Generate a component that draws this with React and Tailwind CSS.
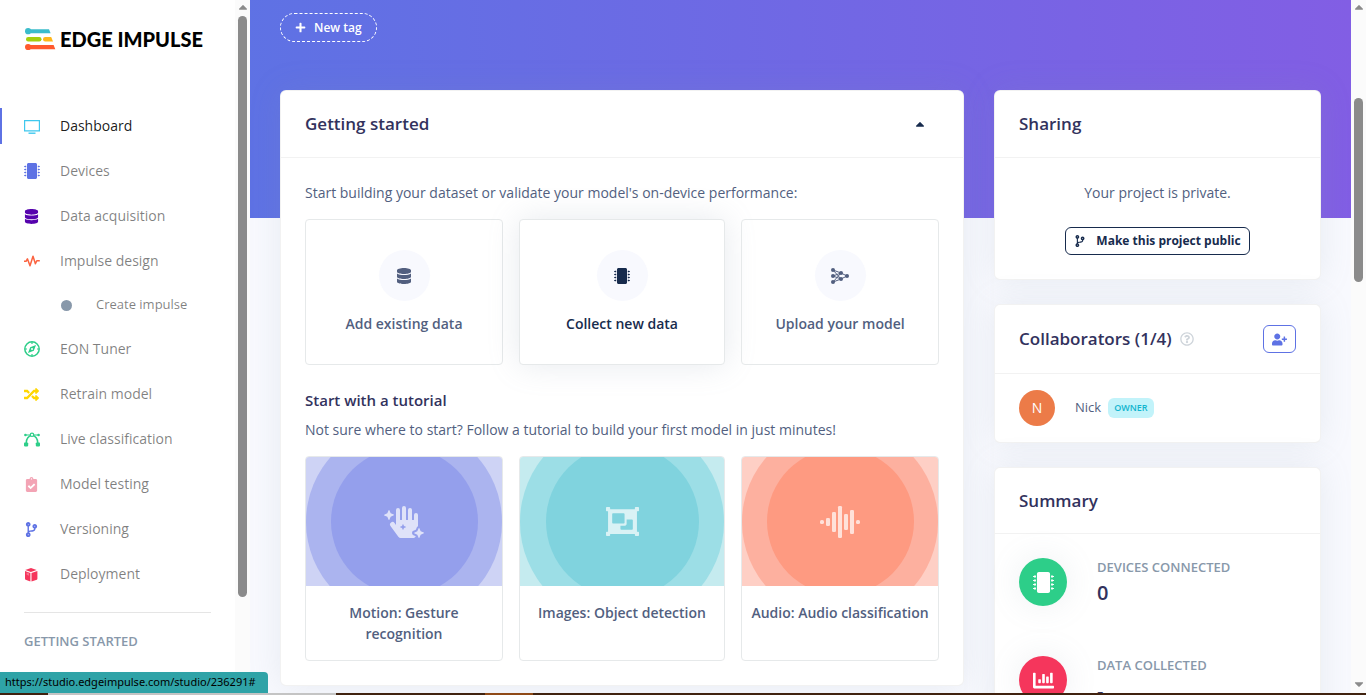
import React from "react";
import {
  FaMicrochip,
  FaDatabase,
  FaRandom,
  FaClipboardCheck,
  FaCodeBranch,
  FaPlus,
  FaUserPlus,
  FaChartBar,
  FaHandSparkles,
  FaObjectGroup,
  FaCaretUp,
  FaCaretDown,
  FaRegQuestionCircle,
} from "react-icons/fa";

const ScreenIcon = () => (
  <svg width="16" height="16" viewBox="0 0 16 16" fill="none" stroke="currentColor">
    <path d="M.6 2.6h14.8v10.3H.6z" strokeWidth="1.2" />
    <path d="M4.5 15.2h7" strokeWidth="1.4" />
  </svg>
);

const PulseIcon = () => (
  <svg width="16" height="16" viewBox="0 0 16 16" fill="none" stroke="currentColor" strokeWidth="1.5" strokeLinejoin="round">
    <path d="M0 8.2h2.2l1.2-2.4 2.6 7 3-9.6 2.4 7.6 1.4-3h3" />
  </svg>
);

const CompassIcon = () => (
  <svg width="16" height="16" viewBox="0 0 16 16" fill="none" stroke="currentColor">
    <circle cx="8" cy="8" r="7.2" strokeWidth="1.5" />
    <path d="M8 1v2M8 13v2M1 8h2M13 8h2" strokeWidth="1.2" />
    <path d="M12 4 9.8 9.8 4 12 6.2 6.2z" fill="currentColor" stroke="none" />
    <circle cx="8" cy="8" r="1" fill="white" stroke="none" />
  </svg>
);

const VectorIcon = () => (
  <svg width="16" height="16" viewBox="0 0 16 16" fill="none" stroke="currentColor" strokeWidth="1.2">
    <path d="M2.2 12C2.4 7.6 4.6 4.8 8 4.2c3.4.6 5.6 3.4 5.8 7.8" strokeWidth="1.5" />
    <path d="M2 4h4M10 4h4" />
    <circle cx="8" cy="3.8" r="1.7" fill="white" />
    <circle cx="1.4" cy="4" r="1.3" fill="currentColor" stroke="none" />
    <circle cx="14.6" cy="4" r="1.3" fill="currentColor" stroke="none" />
    <rect x="0" y="11.4" width="4.2" height="4" rx=".8" fill="currentColor" stroke="none" />
    <rect x="11.8" y="11.4" width="4.2" height="4" rx=".8" fill="currentColor" stroke="none" />
  </svg>
);

const BoxIcon = () => (
  <svg width="15" height="16" viewBox="0 0 15 16" fill="currentColor">
    <path d="M7 2 12.6 4 6.9 6.1 1.2 4z" />
    <path d="M1 5.1 6.4 7.1V15.4L1.6 13.7Q1 13.4 1 12.8z" />
    <path d="M13.4 5.1 7.5 7.1V15.4l5.3-1.7q.6-.3.6-.9z" />
    <path d="m2.6 6.4 2.4.9v2.4l-2.4-.9z" fill="white" opacity=".3" />
  </svg>
);

const NetworkIcon = () => (
  <svg width="18" height="16" viewBox="0 0 18 16" fill="currentColor" stroke="currentColor">
    <path d="M2 2l8 3 6 3-6 3-8 3M2 2l8 9M2 14l8-9M2 8l8-3M2 8l8 3" fill="none" strokeWidth="1" />
    <g stroke="none">
      <circle cx="2" cy="2" r="2" />
      <circle cx="2" cy="8" r="2" />
      <circle cx="2" cy="14" r="2" />
      <circle cx="10" cy="5" r="2" />
      <circle cx="10" cy="11" r="2" />
      <circle cx="16" cy="8" r="2" />
    </g>
  </svg>
);

const WaveformIcon = () => (
  <svg width="40" height="32" viewBox="0 0 40 32" fill="currentColor">
    <rect x="0" y="14" width="4" height="4" rx="1.6" />
    <rect x="6" y="12" width="4" height="8" rx="1.2" />
    <rect x="12" y="6" width="4" height="20" rx="1.2" />
    <rect x="18" y="0" width="4" height="32" rx="1.2" />
    <rect x="24" y="8" width="4" height="16" rx="1.2" />
    <rect x="30" y="4" width="4" height="24" rx="1.2" />
    <rect x="36" y="14" width="4" height="4" rx="1.6" />
  </svg>
);

const LogoMark = () => (
  <svg width="31" height="23" viewBox="0 0 31 23">
    <path d="M3 1.2h21l1.6 4.1H3z" fill="#3bbccb" />
    <circle cx="3.1" cy="3.2" r="3.1" fill="#3bbccb" />
    <rect x="1" y="9" width="15.5" height="4.4" rx="2.2" fill="#a4cf0c" />
    <path d="M20.2 9h6l1.8 4.4h-7.8a2.2 2.2 0 0 1 0-4.4z" fill="#ffb71b" />
    <path d="M3 17h25.6l1.7 4.2H3z" fill="#ff592d" />
    <circle cx="3.1" cy="19" r="3.1" fill="#ff592d" />
  </svg>
);

const navItems = [
  { label: "Dashboard", icon: <ScreenIcon />, color: "text-[#3fc8ee]", active: true },
  { label: "Devices", icon: <FaMicrochip size={16} />, color: "text-[#5e72e4]" },
  { label: "Data acquisition", icon: <FaDatabase size={15} />, color: "text-[#5603ad]" },
  { label: "Impulse design", icon: <PulseIcon />, color: "text-[#fb6340]" },
  { label: "Create impulse", sub: true },
  { label: "EON Tuner", icon: <CompassIcon />, color: "text-[#2dce89]" },
  { label: "Retrain model", icon: <FaRandom size={15} />, color: "text-[#ffd600]" },
  { label: "Live classification", icon: <VectorIcon />, color: "text-[#2dce89]" },
  { label: "Model testing", icon: <FaClipboardCheck size={15} />, color: "text-[#f3a4b5]" },
  { label: "Versioning", icon: <FaCodeBranch size={15} />, color: "text-[#5e72e4]" },
  { label: "Deployment", icon: <BoxIcon />, color: "text-[#f5365c]" },
];

function NavItem({ item }) {
  if (item.sub) {
    return (
      <li>
        <a href="#create" className="flex h-[34px] items-center pl-[61px] text-[13px] text-black/50">
          <span className="mr-6 size-[11px] rounded-full bg-[#8898aa]" />
          {item.label}
        </a>
      </li>
    );
  }
  return (
    <li>
      <a
        href="#nav"
        className={
          item.active
            ? "flex h-9 items-center border-l-2 border-[#5e72e4] pl-[22px] text-sm text-black/90"
            : "flex h-9 items-center pl-6 text-sm text-black/50"
        }
      >
        <span className={`flex w-9 items-center ${item.color}`}>{item.icon}</span>
        {item.label}
      </a>
    </li>
  );
}

function Sidebar() {
  return (
    <aside className="flex w-[250px] shrink-0 bg-white">
      <div className="min-w-0 flex-1 overflow-hidden">
        <a href="#home" className="flex h-[78px] items-center gap-1 pl-[25px] font-['Lato',sans-serif] text-xl font-black text-black">
          <LogoMark />
          EDGE IMPULSE
        </a>
        <nav className="pt-[30px]">
          <ul className="flex flex-col gap-[9px]">
            {navItems.map((item) => (
              <NavItem key={item.label} item={item} />
            ))}
          </ul>
        </nav>
        <hr className="mx-6 mt-5 border-black/10" />
        <h6 className="mt-5 pl-6 text-[13px] leading-4 font-semibold text-[#8898aa] uppercase">Getting started</h6>
      </div>
      <div className="flex w-[15px] flex-col items-center bg-[#fbfbfb]">
        <FaCaretUp size={14} className="mb-0.5 shrink-0 text-[#8b8b8b]" />
        <div className="h-[581px] w-[9px] rounded-full bg-[#8b8b8b]" />
      </div>
    </aside>
  );
}

function Card({ className, children }) {
  return (
    <section className={`rounded-md border border-black/5 bg-white shadow-[0_0_32px_0_rgba(136,152,170,0.15)] ${className ?? ""}`}>
      {children}
    </section>
  );
}

function CardHeader({ title, height = "h-[67px]", children }) {
  return (
    <header className={`flex items-center border-b border-black/5 px-6 ${height}`}>
      <h2 className="text-[17px] leading-6 font-semibold text-[#32325d]">{title}</h2>
      {children}
    </header>
  );
}

const starters = [
  { label: "Add existing data", icon: <FaDatabase size={16} /> },
  { label: "Collect new data", icon: <FaMicrochip size={16} />, hot: true },
  { label: "Upload your model", icon: <NetworkIcon /> },
];

const tutorials = [
  { label: "Motion: Gesture recognition", icon: <FaHandSparkles size={40} />, outer: "bg-[#ced3f5]", ring: "bg-[#abb4ef]", inner: "bg-[#949fec]" },
  { label: "Images: Object detection", icon: <FaObjectGroup size={33} />, outer: "bg-[#c5ebef]", ring: "bg-[#9cdee6]", inner: "bg-[#80d3de]" },
  { label: "Audio: Audio classification", icon: <WaveformIcon />, outer: "bg-[#fecfc5]", ring: "bg-[#fdb09f]", inner: "bg-[#fe9a81]" },
];

function GettingStarted() {
  return (
    <Card className="col-span-2">
      <CardHeader title="Getting started">
        <button type="button" aria-label="Collapse" className="mr-3 ml-auto text-[#172b4d]">
          <FaCaretUp size={14} />
        </button>
      </CardHeader>
      <div className="px-6 pt-6 pb-6">
        <p className="text-sm leading-[22px]">Start building your dataset or validate your model's on-device performance:</p>
        <div className="mt-[15px] grid grid-cols-[198fr_206fr_198fr] gap-4">
          {starters.map((s) => (
            <button
              key={s.label}
              type="button"
              className={
                s.hot
                  ? "flex h-[146px] flex-col items-center rounded border border-[#e6e9ea] bg-white pt-[30px] text-[#172b4d] shadow-[0_0_32px_0_rgba(136,152,170,0.2)]"
                  : "flex h-[146px] flex-col items-center rounded border border-[#e6e9ea] pt-[30px]"
              }
            >
              <span className="flex size-[51px] items-center justify-center rounded-full bg-[#f8f9fe]">{s.icon}</span>
              <span className="mt-3 text-sm leading-[21px] font-semibold">{s.label}</span>
            </button>
          ))}
        </div>
        <h3 className="mt-6 text-[15px] leading-[22px] font-semibold text-[#32325d]">Start with a tutorial</h3>
        <p className="mt-2 text-sm leading-[22px]">Not sure where to start? Follow a tutorial to build your first model in just minutes!</p>
        <div className="mt-[15px] grid grid-cols-[198fr_206fr_198fr] gap-4">
          {tutorials.map((t) => (
            <a key={t.label} href="#tutorial" className="flex h-[205px] flex-col overflow-hidden rounded border border-[#e6e9ea]">
              <span className={`flex h-[129px] items-center justify-center overflow-hidden ${t.outer}`}>
                <span className={`flex aspect-square w-full shrink-0 items-center justify-center rounded-full ${t.ring}`}>
                  <span className={`flex aspect-square w-3/4 items-center justify-center rounded-full text-white/70 ${t.inner}`}>
                    {t.icon}
                  </span>
                </span>
              </span>
              <span className="px-1 pt-4 text-center text-sm leading-[21px] font-semibold">{t.label}</span>
            </a>
          ))}
        </div>
      </div>
    </Card>
  );
}

function Stat({ icon, color, label, value }) {
  return (
    <div className="flex gap-[30px]">
      <span className={`flex size-12 shrink-0 items-center justify-center rounded-full text-white shadow-[0_0_32px_0_rgba(136,152,170,0.15)] ${color}`}>
        {icon}
      </span>
      <div>
        <h5 className="text-[13px] leading-[19px] font-semibold text-[#8898aa] uppercase">{label}</h5>
        <p className="text-xl leading-8 font-semibold text-[#32325d]">{value}</p>
      </div>
    </div>
  );
}

function RightColumn() {
  return (
    <div className="flex flex-col gap-6">
      <Card>
        <CardHeader title="Sharing" />
        <div className="flex flex-col items-center px-6 py-6">
          <p className="text-sm leading-[22px]">Your project is private.</p>
          <button type="button" className="mt-[23px] flex h-7 items-center gap-[10px] rounded-md border border-[#172b4d] px-2 text-xs font-bold text-[#172b4d]">
            <FaCodeBranch size={12} />
            Make this project public
          </button>
        </div>
      </Card>
      <Card>
        <CardHeader title="Collaborators (1/4)" height="h-[69px]">
          <FaRegQuestionCircle size={14} className="ml-2 text-[#ced4da]" />
          <button type="button" aria-label="Add collaborator" className="ml-auto flex h-7 w-[33px] items-center justify-center rounded-md border border-[#5e72e4] text-[#5e72e4]">
            <FaUserPlus size={15} />
          </button>
        </CardHeader>
        <div className="flex items-center px-6 py-4">
          <span className="flex size-9 items-center justify-center rounded-full bg-[#ec7b48] text-sm text-white">N</span>
          <span className="ml-5 text-[13px]">Nick</span>
          <span className="ml-[7px] flex h-5 items-center rounded-md bg-[#c2f3fa] px-1.5 text-[9px] font-semibold text-[#11b5cf] uppercase">Owner</span>
        </div>
      </Card>
      <Card>
        <CardHeader title="Summary" height="h-[66px]" />
        <div className="flex flex-col gap-[47px] px-6 pt-6 pb-6">
          <Stat icon={<FaMicrochip size={21} />} color="bg-[#2dce89]" label="Devices connected" value="0" />
          <Stat icon={<FaChartBar size={21} />} color="bg-[#f5365c]" label="Data collected" value="-" />
        </div>
      </Card>
    </div>
  );
}

export default function App() {
  return (
    <div className="relative flex h-screen overflow-hidden bg-[#f8f9fe] font-['Open_Sans',sans-serif] text-[#525f7f]">
      <Sidebar />
      <main className="min-w-0 flex-1 overflow-hidden bg-[linear-gradient(87deg,#5e72e4,#825ee4)] bg-[length:100%_218px] bg-no-repeat px-[30px] pt-[13px]">
        <button type="button" className="flex h-[29px] items-center gap-2 rounded-full border border-dashed border-white px-3.5 text-xs font-semibold text-white">
          <FaPlus size={11} />
          New tag
        </button>
        <div className="mt-12 grid grid-cols-3 items-start gap-[30px]">
          <GettingStarted />
          <RightColumn />
        </div>
      </main>
      <div className="flex w-[15px] shrink-0 flex-col items-center bg-[#fbfbfb] pb-1">
        <FaCaretUp size={14} className="shrink-0 text-[#8b8b8b]" />
        <div className="mt-[84px] h-[184px] w-[9px] rounded-full bg-[#8b8b8b]" />
        <FaCaretDown size={14} className="mt-auto shrink-0 text-[#8b8b8b]" />
      </div>
      <div className="absolute inset-x-0 bottom-0">
        <div className="flex h-[21px] w-[268px] items-center rounded-tr bg-[#2fa3a7] pl-[5px] font-['Noto_Sans',sans-serif] text-[11px] text-black">
          https://studio.edgeimpulse.com/studio/236291#
        </div>
        <div className="flex h-0.5 bg-[#40220f]">
          <div className="w-12" />
          <div className="w-72 bg-[#c4c4c4]" />
          <div className="ml-[149px] w-12 bg-[#8f4a17]" />
        </div>
      </div>
    </div>
  );
}
